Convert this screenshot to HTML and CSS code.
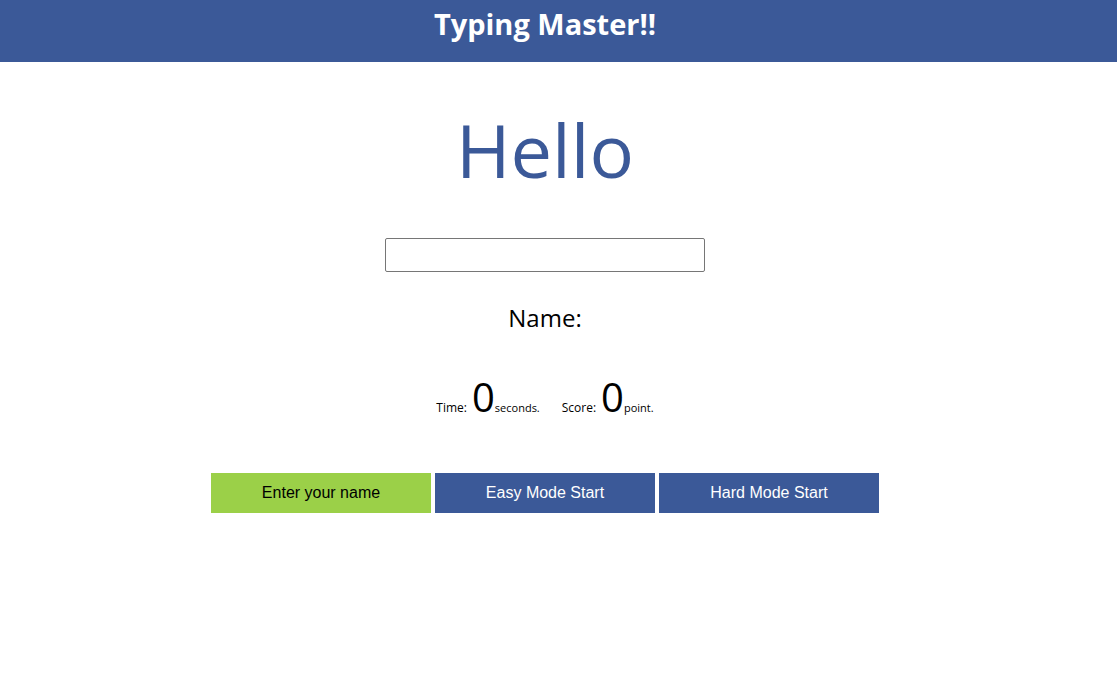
FILE: index.html
```html
<!DOCTYPE html>
<html>
<head>
<meta charset="utf-8">
<title>Typing Master</title>
<link rel="stylesheet" href="styles.css">
</head>
<body>
<header class="topbar">
  <div class="topbar-inner"><h1 class="title">Typing Master!!</h1></div>
</header>
<main class="main">
  <div class="word">Hello</div>
  <input class="word-input" type="text">
  <div class="name">Name:</div>
  <div class="stats">
    <span class="label">Time:</span><span class="big">0</span><span class="unit">seconds.</span>
    <span class="label score-label">Score:</span><span class="big">0</span><span class="unit">point.</span>
  </div>
  <div class="buttons">
    <button class="btn btn-green">Enter your name</button>
    <button class="btn btn-blue">Easy Mode Start</button>
    <button class="btn btn-blue">Hard Mode Start</button>
  </div>
</main>
</body>
</html>
```
FILE: styles.css
```css
html, body {
  margin: 0;
  padding: 0;
  background: #fff;
  font-family: "Open Sans", "Noto Sans", sans-serif;
}
.topbar {
  background: #3b5998;
  height: 62px;
}
.topbar-inner {
  width: 1090px;
  text-align: center;
}
.title {
  margin: 0;
  color: #fff;
  font-size: 29px;
  font-weight: 700;
  line-height: 48px;
}
.main {
  width: 1090px;
  display: flex;
  flex-direction: column;
  align-items: center;
}
.word {
  margin-top: 51px;
  color: #3b5998;
  font-size: 74px;
  line-height: 74px;
  height: 74px;
}
.word-input {
  margin-top: 51px;
  width: 320px;
  height: 34px;
  box-sizing: border-box;
  border: 1px solid #767676;
  border-radius: 2px;
  padding: 0 6px;
  font-size: 16px;
}
.name {
  margin-top: 30px;
  font-size: 24px;
  color: #000;
  line-height: 32px;
}
.stats {
  margin-top: 43px;
  display: flex;
  align-items: baseline;
  color: #000;
}
.label {
  font-size: 12px;
  margin-right: 5px;
}
.score-label {
  margin-left: 22px;
}
.big {
  font-size: 40px;
  line-height: 1;
}
.unit {
  font-size: 11px;
}
.buttons {
  margin-top: 56px;
  display: flex;
  gap: 4px;
}
.btn {
  width: 220px;
  height: 40px;
  border: none;
  border-radius: 0;
  font-family: "Liberation Sans", Arial, sans-serif;
  font-size: 16px;
  padding: 0;
  cursor: pointer;
}
.btn-green {
  background: #9bd048;
  color: #000;
}
.btn-blue {
  background: #3b5998;
  color: #fff;
}
```
